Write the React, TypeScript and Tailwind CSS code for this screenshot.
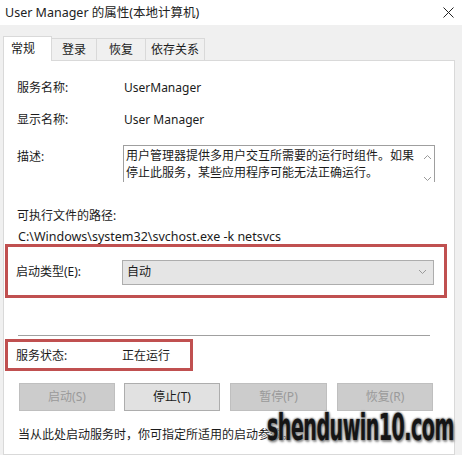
import React from "react"

const font = { fontFamily: '"Noto Sans", "Noto Sans CJK SC", sans-serif' }

function Chevron({ up = false }: { up?: boolean }) {
    return (
        <svg width="9" height="6" viewBox="0 0 9 6" className="block">
            <path d={up ? "M1 5 L4.5 1.5 L8 5" : "M1 1 L4.5 4.5 L8 1"} fill="none" stroke="#9a9a9a" strokeWidth="1" />
        </svg>
    )
}

export default function App() {
    const tabs = [
        { label: "常规", w: "w-[49px]", active: true },
        { label: "登录", w: "w-[45px]", active: false },
        { label: "恢复", w: "w-[49px]", active: false },
        { label: "依存关系", w: "w-[59px]", active: false },
    ]

    return (
        <div className="relative w-[462px] h-[455px] overflow-hidden bg-[#f0f0f0] text-[12px] text-[#1b1b1b] flex flex-col" style={font}>
            {/* title bar */}
            <div className="h-[25px] bg-white flex items-center justify-between pl-[5px] pr-[8px] shrink-0">
                <span className="text-[12.5px] leading-[16px] text-[#222]">User Manager 的属性(本地计算机)</span>
                <svg width="11" height="11" viewBox="0 0 11 11">
                    <path d="M0.5 0.5 L10.5 10.5 M10.5 0.5 L0.5 10.5" stroke="#222" strokeWidth="1" />
                </svg>
            </div>

            {/* tabs */}
            <div className="h-[35px] flex items-end pl-[3px] shrink-0">
                {tabs.map((t) => (
                    <div
                        key={t.label}
                        className={
                            t.active
                                ? `${t.w} h-[25px] -mb-px bg-white border border-b-0 border-[#d9d9d9] flex items-center pl-[7px] z-10 relative`
                                : `${t.w} h-[22px] border border-b-0 border-l-0 border-[#d9d9d9] flex items-center justify-center pt-[1px]`
                        }
                    >
                        {t.label}
                    </div>
                ))}
            </div>

            {/* panel */}
            <div className="ml-[3px] w-[452px] flex-1 bg-white border border-[#d9d9d9] pl-[1px]">
                <div className="flex items-center h-[16px] mt-[19px] pl-[12px]">
                    <span className="w-[107px]">服务名称:</span>
                    <span>UserManager</span>
                </div>
                <div className="flex items-center h-[16px] mt-[16px] pl-[12px]">
                    <span className="w-[107px]">显示名称:</span>
                    <span>User Manager</span>
                </div>
                <div className="flex mt-[17px] pl-[12px]">
                    <span className="w-[106px] pt-[3px]">描述:</span>
                    <div className="w-[312px] h-[37px] border border-[#9f9f9f] border-b-0 flex pl-[2px] pt-[1px]">
                        <div className="flex-1 leading-[17px]">
                            用户管理器提供多用户交互所需要的运行时组件。如果
                            <br />
                            停止此服务，某些应用程序可能无法正确运行。
                        </div>
                        <div className="w-[14px] flex flex-col items-center justify-between pt-[7px] pb-0">
                            <Chevron up />
                            <Chevron />
                        </div>
                    </div>
                </div>
                <div className="h-[16px] mt-[26px] pl-[12px] flex items-center">可执行文件的路径:</div>
                <div className="h-[16px] mt-[5px] pl-[13px] flex items-center text-[12.5px]">C:\Windows\system32\svchost.exe -k netsvcs</div>

                {/* startup type */}
                <div className="w-[442px] h-[54px] mt-[-1px] border-[3px] border-[#c05050] flex items-center pl-[8px]">
                    <span className="w-[106px] pt-[2px]">启动类型(E):</span>
                    <div className="w-[312px] h-[25px] bg-[#e5e5e5] border border-[#adadad] flex items-center justify-between pl-[4px] pr-[6px] mt-[2px]">
                        <span>自动</span>
                        <Chevron />
                    </div>
                </div>

                <div className="ml-[13px] w-[412px] h-px bg-[#a0a0a0] mt-[37px]" />

                {/* status */}
                <div className="w-[188px] h-[32px] mt-[3px] border-[3px] border-[#c05050] flex items-end pb-[3px] pl-[8px]">
                    <span className="w-[106px]">服务状态:</span>
                    <span>正在运行</span>
                </div>

                <div className="flex mt-[12px] pl-[14px] gap-[9px]">
                    <div className="w-[96px] h-[28px] bg-[#cccccc] border border-[#bfbfbf] flex items-center justify-center text-[#9a9a9a]">启动(S)</div>
                    <div className="w-[96px] h-[28px] bg-[#e1e1e1] border border-[#adadad] flex items-center justify-center">停止(T)</div>
                    <div className="w-[97px] h-[28px] ml-[1px] bg-[#cccccc] border border-[#bfbfbf] flex items-center justify-center text-[#9a9a9a]">暂停(P)</div>
                    <div className="w-[96px] h-[28px] ml-[1px] bg-[#cccccc] border border-[#bfbfbf] flex items-center justify-center text-[#9a9a9a]">恢复(R)</div>
                </div>

                <div className="h-[16px] mt-[16px] pl-[13px] flex items-center">当从此处启动服务时，你可指定所适用的启动参数。</div>
            </div>

            {/* watermark */}
            <div
                className="absolute left-[267px] top-[404px] text-[38px] leading-[46px] font-bold text-[#151515] whitespace-nowrap"
                style={{
                    fontFamily: '"DejaVu Sans Condensed", "Liberation Sans Narrow", sans-serif',
                    textShadow: "0 0 2px #888, 0 0 3px #888, 0 0 3px #888, 2px 2px 3px #999",
                    transform: "scaleX(0.56)",
                    transformOrigin: "0 0",
                    letterSpacing: "-1px",
                }}
            >
                shenduwin10.com
            </div>
        </div>
    )
}
